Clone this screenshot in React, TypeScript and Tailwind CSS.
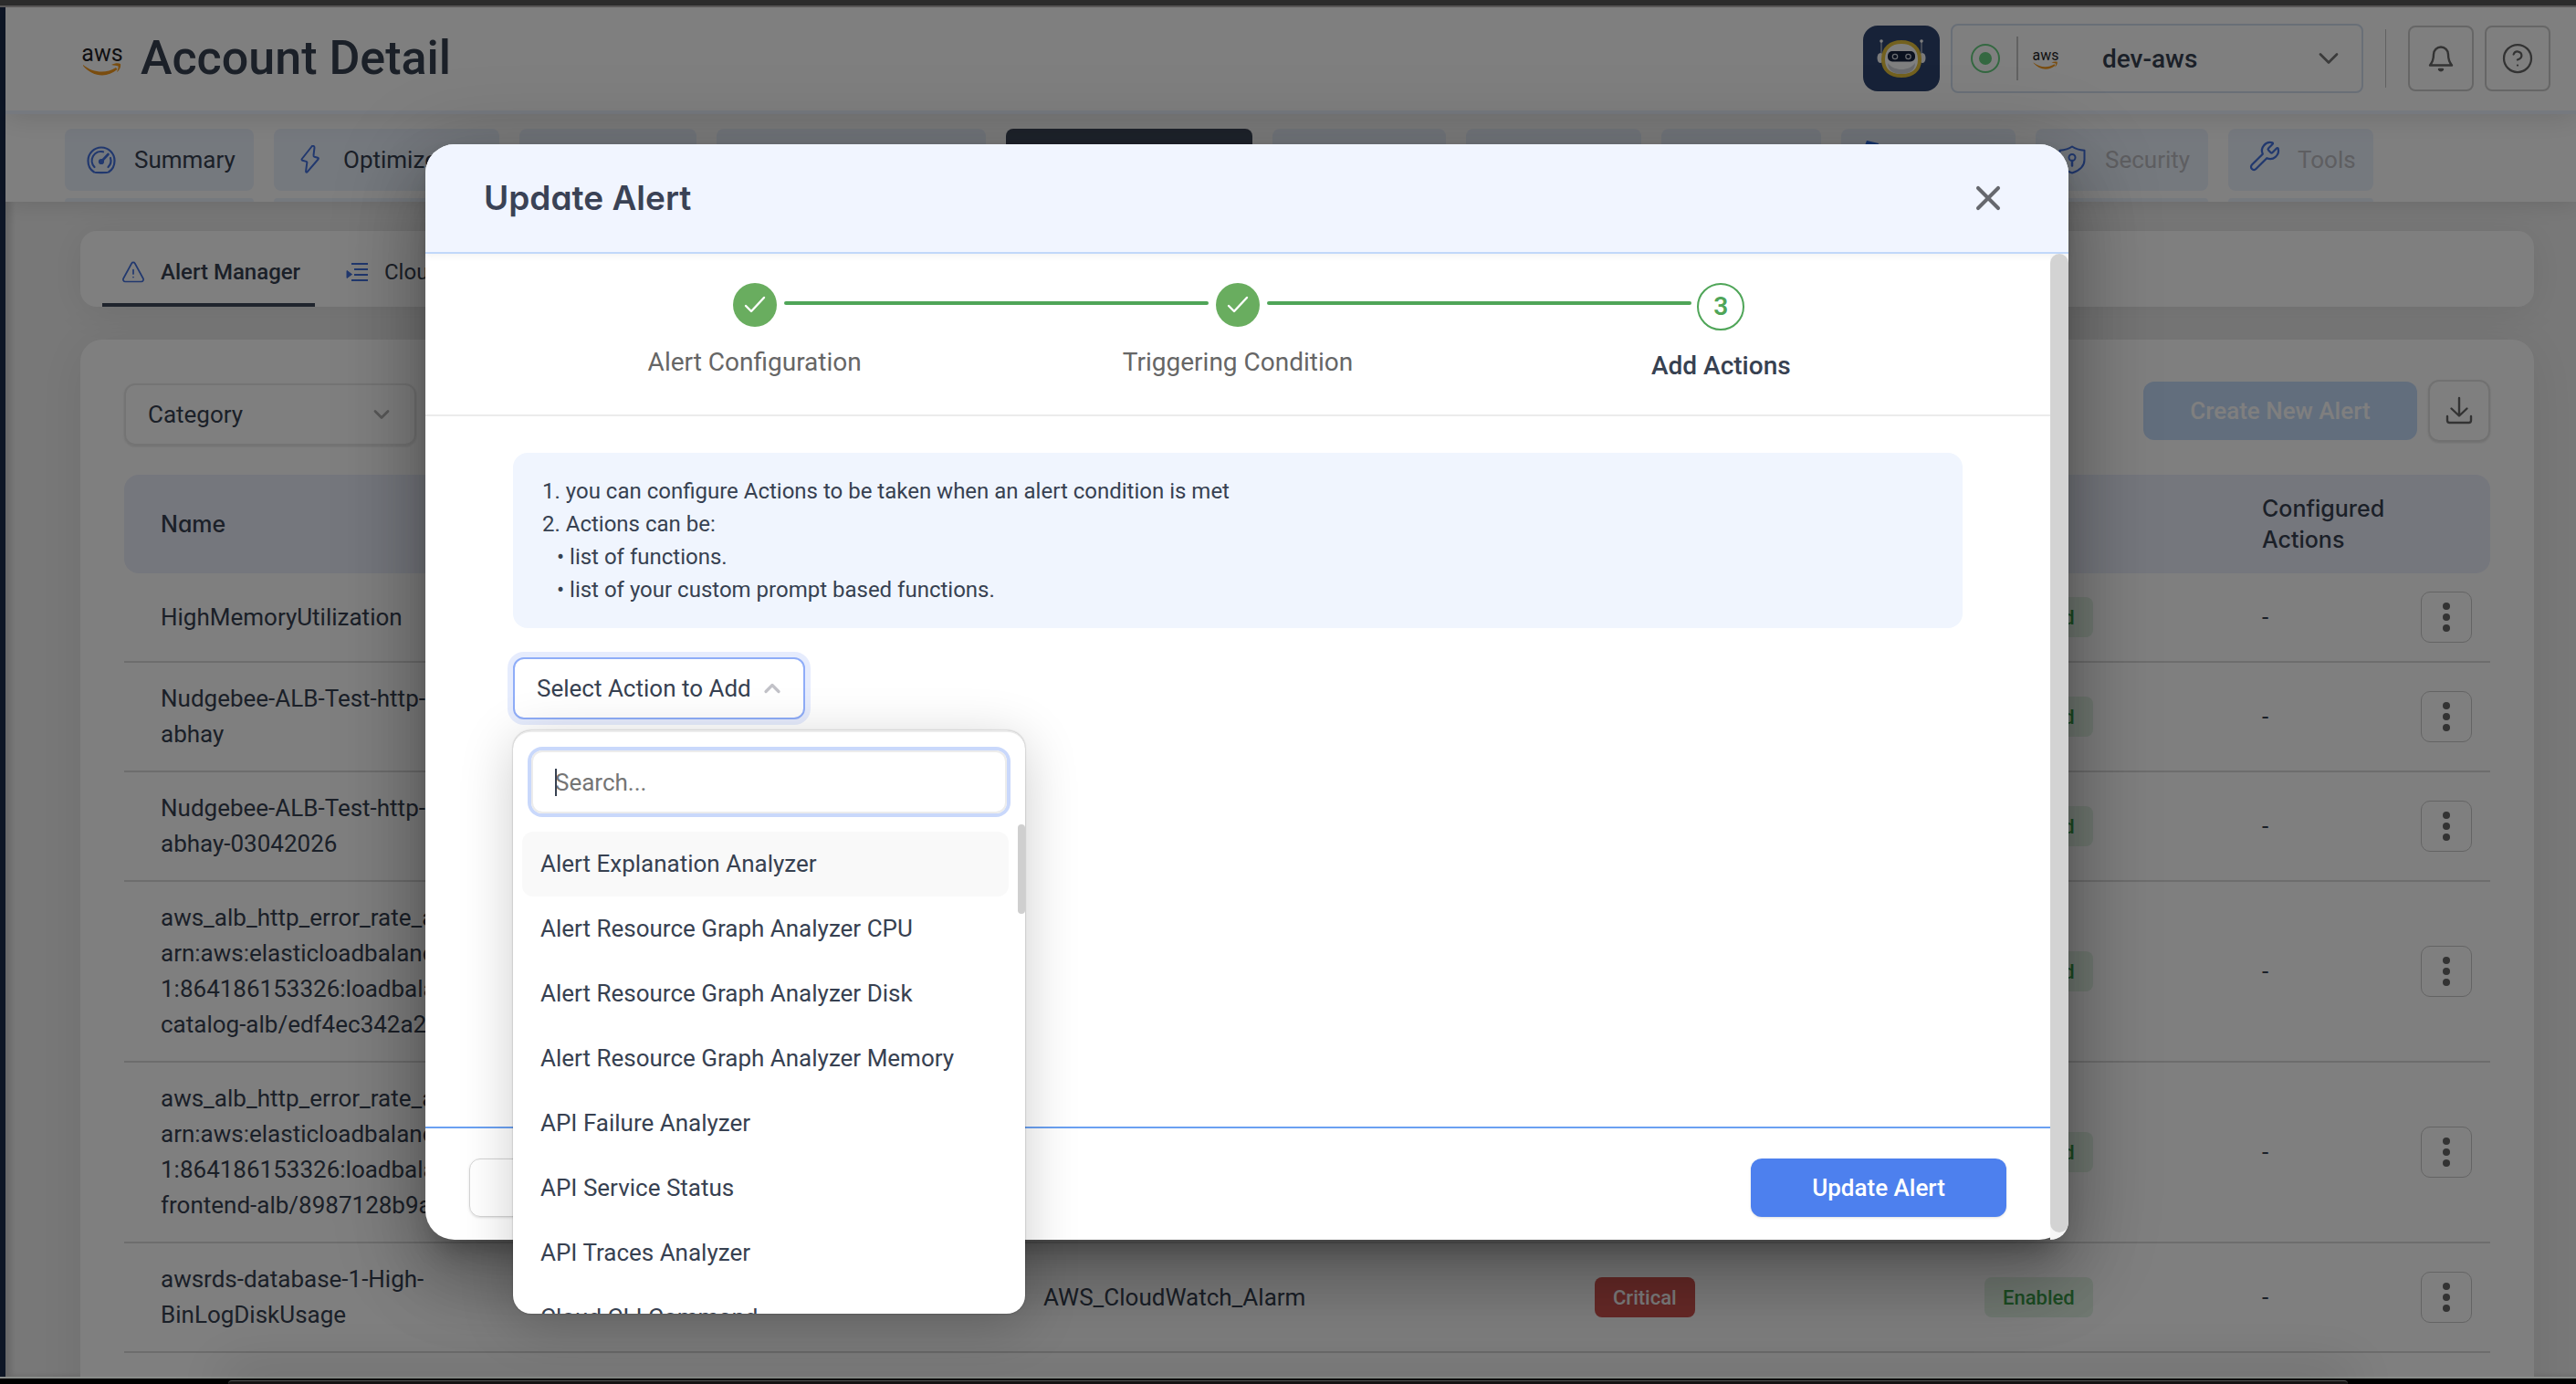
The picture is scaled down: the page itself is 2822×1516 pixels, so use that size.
import React from "react";
import { ChevronDown, ChevronUp, CircleHelp, Wrench, X } from "lucide-react";

const heading = "font-[Inter,sans-serif] [font-feature-settings:'cv11','ss03']";

function AwsLogo({ className }: { className: string }) {
  return (
    <svg viewBox="0 0 44 46" className={`overflow-visible ${className}`} role="img" aria-label="AWS">
      <text x="22" y="26" textAnchor="middle" fontSize="25" fontWeight="400" fontFamily="Roboto, sans-serif" fill="#1f1f26">
        aws
      </text>
      <path d="M1 30c11 9 25 10 36 3l1.500 2C27 45 11 43 1 31z" fill="#f59a1e" />
      <path d="M32 30c4-2 8-2 10-1 .6 3-1 7-4 9 1-3 2-5 1.500-6.500-2-.8-4-.8-7.500-1.500z" fill="#f59a1e" />
    </svg>
  );
}

function GaugeIcon() {
  return (
    <svg viewBox="0 0 32 32" className="size-8" fill="none" stroke="#4371dd" strokeWidth="2.200" strokeLinecap="round">
      <path d="M8 29.500C4 27 1.500 22 1.500 17a14.500 14.500 0 0 1 29 0c0 5-2.500 10-6.500 12.500-1 .8-15 .8-16 0z" strokeLinejoin="round" />
      <path d="M8.500 24A10 10 0 0 1 18 7.300M26 14a10 10 0 0 1-2.500 10" />
      <path d="M16 18l7.500-8" strokeWidth="2.600" />
      <circle cx="16" cy="18" r="2" fill="#4371dd" />
    </svg>
  );
}

function BoltIcon() {
  return (
    <svg viewBox="0 0 32 32" className="size-8" fill="none" stroke="#4371dd" strokeWidth="2" strokeLinejoin="round">
      <path d="M17.500 1.500 6.800 15c-.5.8-.3 1.400.5 1.700l4.200 1.200c.8.300 1 .8.8 1.500l-1.200 9c-.1 1.300.9 1.800 1.700.8L24.500 15.500c.7-.9.4-1.500-.5-1.800l-3.600-1c-.8-.3-1-.8-.9-1.500l1-8.500c0-1.500-1.700-2.800-3-1.200z" />
    </svg>
  );
}

function ShieldIcon() {
  return (
    <svg viewBox="0 0 32 32" className="size-8" fill="none" stroke="#4371dd" strokeWidth="2" strokeLinejoin="round" strokeLinecap="round">
      <path d="M16 1.500c4 2.800 8 3.800 13.500 4.300V16c0 7-6 12-13.500 14.500C8.500 28 2.500 23 2.500 16V5.800C8 5.300 12 4.300 16 1.500z" />
      <circle cx="16" cy="13.500" r="3.500" />
      <path d="M16 17v5.500" strokeWidth="2.500" />
    </svg>
  );
}

function TagIcon() {
  return (
    <svg viewBox="0 0 32 32" className="size-8 overflow-visible" fill="#2f6ae0">
      <path d="M4-5l13 3-3 14L-1 8z" />
    </svg>
  );
}

function WarningIcon() {
  return (
    <svg viewBox="0 0 24 24" className="size-6" fill="none" stroke="#4371dd" strokeWidth="1.700" strokeLinejoin="round" strokeLinecap="round">
      <path d="M10.200 2.500c.8-1.400 2.800-1.400 3.600 0l9 16.500c.8 1.600-.2 3.500-2 3.500H3.200c-1.800 0-2.800-1.900-2-3.500z" />
      <path d="M12 9.500v4.500M12 17.500v.1" />
    </svg>
  );
}

function ListIcon() {
  return (
    <svg viewBox="0 0 24 24" className="size-6" fill="none" stroke="#4371dd" strokeWidth="2">
      <path d="M6 3h18M9 9h15M9 15h15M6 21h18" />
      <path d="M1 10.500 6.500 14.500 1 18.500z" fill="#4371dd" strokeWidth="1" />
    </svg>
  );
}

function RobotIcon() {
  return (
    <svg viewBox="0 0 84 72" className="h-[72px] w-[84px]">
      <path d="M20 18v18M64 18v18" stroke="#a8b0c0" strokeWidth="1.500" />
      <circle cx="20" cy="17" r="1.800" fill="#fff" />
      <circle cx="64" cy="17" r="1.800" fill="#fff" />
      <ellipse cx="19" cy="35.500" rx="3.500" ry="5.500" fill="#f4f4f6" />
      <ellipse cx="65" cy="35.500" rx="3.500" ry="5.500" fill="#f4f4f6" />
      <path d="M42 18c12 0 20 7 20 19S54 55 42 55 22 49 22 37s8-19 20-19z" fill="#fff" stroke="#e6c23e" strokeWidth="4" />
      <path d="M27 41c4 5 9 7 15 7s11-2 15-7c0 8-6 12-15 12s-15-4-15-12z" fill="#d2d4da" />
      <rect x="27" y="28" width="30" height="11.500" rx="5" fill="#17233f" />
      <circle cx="35" cy="34" r="2.700" fill="none" stroke="#d5d9e2" strokeWidth="1.200" />
      <circle cx="49.500" cy="34" r="2.700" fill="none" stroke="#d5d9e2" strokeWidth="1.200" />
    </svg>
  );
}

function BellIcon() {
  return (
    <svg viewBox="0 0 32 32" className="size-8" fill="none" stroke="#666" strokeWidth="2.400" strokeLinejoin="round" strokeLinecap="round">
      <path d="M4 23.500c2.500-3 4-6 4-12a8 8 0 0 1 16 0c0 6 1.500 9 4 12z" />
      <path d="M14 28c1 1.600 3 1.600 4 0z" />
    </svg>
  );
}

function DownloadIcon() {
  return (
    <svg viewBox="0 0 32 32" className="size-8" fill="none" stroke="#666" strokeWidth="2.400" strokeLinejoin="round" strokeLinecap="round">
      <path d="M16 2v19M7.500 13.500 16 21.500l8.500-8M3 22v4.500c0 1.500 1 2.500 2.500 2.500h21c1.500 0 2.500-1 2.500-2.500V22" />
    </svg>
  );
}

function CheckIcon() {
  return (
    <svg viewBox="0 0 24 24" className="size-6" fill="none" stroke="#fff" strokeWidth="2.400" strokeLinejoin="round" strokeLinecap="round">
      <path d="M2 13l6 6L22 4" />
    </svg>
  );
}

type Tab = { label: string; width: string; icon?: React.ReactNode; text?: boolean; active?: boolean; disabled?: boolean };

const tabs: Tab[] = [
  { label: "Summary", width: "w-[207px]", icon: <GaugeIcon />, text: true },
  { label: "Optimize", width: "w-[247px]", icon: <BoltIcon />, text: true },
  { label: "Tab 3", width: "w-[194px]" },
  { label: "Tab 4", width: "w-[295px]" },
  { label: "Tab 5", width: "w-[270px]", active: true },
  { label: "Tab 6", width: "w-[190px]" },
  { label: "Tab 7", width: "w-[192px]" },
  { label: "Tab 8", width: "w-[175px]" },
  { label: "Tab 9", width: "w-[191px]", icon: <TagIcon /> },
  { label: "Security", width: "w-[189px]", icon: <ShieldIcon />, text: true, disabled: true },
  { label: "Tools", width: "w-[159px]", icon: <Wrench className="-mx-0.5 mb-2 size-9 shrink-0 text-[#4371dd]" strokeWidth={1.5} />, text: true, disabled: true },
];

const alerts: string[][] = [
  ["HighMemoryUtilization"],
  ["Nudgebee-ALB-Test-http-error-", "abhay"],
  ["Nudgebee-ALB-Test-http-error-", "abhay-03042026"],
  ["aws_alb_http_error_rate_alarm_", "arn:aws:elasticloadbalancing:us-east-", "1:864186153326:loadbalancer/app/", "catalog-alb/edf4ec342a2e"],
  ["aws_alb_http_error_rate_alarm_", "arn:aws:elasticloadbalancing:us-east-", "1:864186153326:loadbalancer/app/", "frontend-alb/8987128b9a"],
  ["awsrds-database-1-High-", "BinLogDiskUsage"],
];

const actions = [
  "Alert Explanation Analyzer",
  "Alert Resource Graph Analyzer CPU",
  "Alert Resource Graph Analyzer Disk",
  "Alert Resource Graph Analyzer Memory",
  "API Failure Analyzer",
  "API Service Status",
  "API Traces Analyzer",
  "Cloud CLI Command",
];

function Header() {
  return (
    <header className="relative z-10 flex h-[117px] shrink-0 items-center justify-between border-b-4 border-[#edf3fe] bg-white pr-7 pb-0.5 pl-[84px] shadow-[0_2px_30px_rgba(0,0,0,0.14)]">
      <div className="flex items-center gap-5">
        <AwsLogo className="h-[46px] w-11" />
        <h1 className="text-[52px] leading-none font-medium">Account Detail</h1>
      </div>
      <div className="flex items-center gap-3">
        <button aria-label="Assistant" className="rounded-[16px] bg-[#2f4570]">
          <RobotIcon />
        </button>
        <div className="relative flex h-[76px] w-[452px] items-center rounded-lg border-2 border-[#d3deee]">
          <span className="ml-5 flex size-8 items-center justify-center rounded-full border-2 border-[#69d183]">
            <span className="size-[14px] rounded-full bg-[#69d183]" />
          </span>
          <span className="ml-[18px] h-12 w-0.5 bg-[#c4c4c4]" />
          <AwsLogo className="ml-4 h-[30px] w-7" />
          <select aria-label="Account" className="h-full flex-1 appearance-none pt-0.5 pl-12 text-[28px] font-medium outline-none">
            <option>dev-aws</option>
          </select>
          <ChevronDown className="pointer-events-none absolute right-[18px] size-9 text-[#777]" strokeWidth={1.8} />
        </div>
        <span className="mx-3 h-16 w-px bg-[#c4c4c4]" />
        <button aria-label="Notifications" className="flex size-[72px] items-center justify-center rounded-lg border-2 border-[#cdcdcd]">
          <BellIcon />
        </button>
        <button aria-label="Help" className="flex size-[72px] items-center justify-center rounded-lg border-2 border-[#cdcdcd]">
          <CircleHelp className="size-9 text-[#666]" strokeWidth={1.5} />
        </button>
      </div>
    </header>
  );
}

function NavTabs() {
  return (
    <nav className="relative flex h-24 shrink-0 gap-[22px] bg-white pt-4 pl-[65px] shadow-[0_2px_24px_rgba(0,0,0,0.12)]">
      {tabs.map((t) => (
        <div key={t.label} className={`flex shrink-0 flex-col gap-2 ${t.width}`}>
          <button
            aria-label={t.label}
            disabled={t.disabled}
            className={`flex h-[68px] items-center gap-5 rounded-lg pl-6 text-[26px] ${t.active ? "bg-[#40495b]" : "bg-[#ebf2fd]"} ${t.disabled ? "text-[#bcbdc2]" : ""}`}
          >
            {t.icon}
            {t.text && t.label}
          </button>
          <span className="h-1 rounded-t-sm bg-[#ebf2fd]" />
        </div>
      ))}
    </nav>
  );
}

function AlertTable() {
  return (
    <table className="w-full table-fixed border-separate border-spacing-0 text-left text-[26px] leading-[39px]">
      <colgroup>
        <col />
        <col className="w-[604px]" />
        <col className="w-[427px]" />
        <col className="w-[304px]" />
        <col className="w-[194px]" />
        <col className="w-24" />
      </colgroup>
      <thead className={`${heading} text-[25px] leading-[34px]`}>
        <tr className="h-[108px] [&>th]:bg-[#ebeefb] [&>th]:pl-10 [&>th]:font-medium">
          <th className="rounded-l-2xl">Name</th>
          <th>Source</th>
          <th>Severity</th>
          <th className="!pl-[52px]">Status</th>
          <th>Configured Actions</th>
          <th className="rounded-r-2xl" aria-label="Row menu" />
        </tr>
      </thead>
      <tbody>
        {alerts.map((lines, i) => (
          <tr key={i} className="[&>td]:border-b-2 [&>td]:border-[#dadada] [&>td]:py-5 [&>td]:pl-10">
            <td>
              {lines.map((l) => (
                <div key={l}>{l}</div>
              ))}
            </td>
            <td>AWS_CloudWatch_Alarm</td>
            <td>
              <span className="inline-flex h-11 items-center rounded-lg bg-[#d15451] px-5 align-middle text-[22px] font-medium text-white">Critical</span>
            </td>
            <td>
              <span className="inline-flex h-11 items-center rounded-lg bg-[#e2f3e5] px-5 align-middle text-[22px] font-medium text-[#3b9a49]">Enabled</span>
            </td>
            <td>-</td>
            <td className="!pl-5">
              <button aria-label="More actions" className="flex size-14 flex-col items-center justify-center gap-1 rounded-[10px] border border-[#c8c8c8]">
                <i className="size-2 rounded-full bg-[#666]" />
                <i className="size-2 rounded-full bg-[#666]" />
                <i className="size-2 rounded-full bg-[#666]" />
              </button>
            </td>
          </tr>
        ))}
      </tbody>
    </table>
  );
}

function Background() {
  return (
    <div className="flex h-full">
      <div className="w-1.5 shrink-0 bg-[#1b2d4d]" />
      <div className="flex min-w-0 flex-1 flex-col bg-[#f1f1f1] shadow-[inset_6px_0_6px_rgba(0,0,0,0.14)]">
        <Header />
        <NavTabs />
        <main className="flex flex-col px-[82px] pr-[46px] pt-8">
          <div className="flex h-[83px] items-stretch rounded-[18px] bg-white pl-6 text-2xl shadow-[0_4px_40px_rgba(0,0,0,0.08)]">
            <button className="flex w-[233px] items-center gap-[18px] border-b-4 border-[#40495b] pt-2.5 pl-[22px] font-medium">
              <WarningIcon />
              Alert Manager
            </button>
            <button className="flex items-center gap-[18px] pt-1.5 pl-[34px]">
              <ListIcon />
              CloudWatch
            </button>
          </div>
          <section className="mt-9 h-[1300px] rounded-[24px] bg-white px-12 pt-11 shadow-[0_4px_60px_rgba(0,0,0,0.08)]">
            <div className="mb-9 flex h-[68px] items-center justify-between">
              <div className="relative mt-2 flex h-[68px] w-80 items-center rounded-xl border-2 border-[#e8e8e8] shadow-sm">
                <select aria-label="Category" className="h-full w-full appearance-none pl-6 text-[26px] outline-none">
                  <option>Category</option>
                </select>
                <ChevronDown className="pointer-events-none absolute right-[22px] size-7 text-[#b0b0b0]" strokeWidth={2.4} />
              </div>
              <div className="flex items-center gap-3">
                <button disabled className="h-16 w-[300px] rounded-xl bg-[#c5dcfb] text-[26px] font-medium text-white">
                  Create New Alert
                </button>
                <button aria-label="Download" className="flex size-[68px] items-center justify-center rounded-xl border-2 border-[#e2e2e2] shadow-sm">
                  <DownloadIcon />
                </button>
              </div>
            </div>
            <AlertTable />
          </section>
        </main>
      </div>
    </div>
  );
}

function Stepper() {
  const steps = ["Alert Configuration", "Triggering Condition", "Add Actions"];
  return (
    <ol className="grid h-[178px] grid-cols-3 border-b-2 border-[#ebebeb] px-24 pt-8 text-[28px] text-[#666]">
      {steps.map((s, i) => {
        const current = i === 2;
        return (
          <li key={s} className="relative flex flex-col items-center gap-5">
            {i > 0 && <span className="absolute top-5 right-1/2 left-[-50%] mr-8 ml-8 h-1 rounded-full bg-[#4fa558]" />}
            {current ? (
              <span className="flex size-[52px] items-center justify-center rounded-full border-2 border-[#4fa558] font-semibold text-[#4fa558]">3</span>
            ) : (
              <span className="flex size-12 items-center justify-center rounded-full bg-[#69ad5f]">
                <CheckIcon />
              </span>
            )}
            <span className={current ? "leading-[38px] font-medium text-[#374151]" : "leading-[38px]"}>{s}</span>
          </li>
        );
      })}
    </ol>
  );
}

function ActionPicker() {
  return (
    <div className="relative mt-8 w-80">
      <button
        aria-haspopup="listbox"
        aria-expanded="true"
        className="flex h-[68px] w-full items-center justify-between rounded-xl border-2 border-[#8fadf8] bg-white pr-5 pl-6 text-[26px] ring-6 ring-[#e6ecfd]"
      >
        Select Action to Add
        <ChevronUp className="size-7 text-[#c2c2c8]" strokeWidth={2.8} />
      </button>
      <div className="absolute top-20 left-0 z-20 flex h-[639px] w-[561px] flex-col overflow-hidden rounded-[20px] border-t-2 border-[#ececec] bg-white shadow-[0_0_2px_rgba(0,0,0,0.35),0_12px_60px_rgba(0,0,0,0.2)]">
        <input
          type="text"
          aria-label="Search actions"
          placeholder="Search..."
          className="mx-5 mt-5 h-[69px] shrink-0 rounded-xl border-2 border-[#ececec] pl-6 text-[26px] outline-none ring-4 ring-[#c9d8fb] placeholder:text-[#757575]"
        />
        <span className="pointer-events-none absolute top-[40px] left-[46px] h-[30px] w-0.5 bg-[#374151]" />
        <div className="mt-3 flex min-h-0 flex-1">
          <ul role="listbox" aria-label="Actions" className="flex-1 overflow-hidden pt-2 pl-2.5 text-[26px] leading-[39px]">
            {actions.map((a, i) => (
              <li key={a} role="option" aria-selected={i === 0} className={`mr-2.5 rounded-xl px-5 py-4 ${i === 0 ? "bg-[#f9f9f9]" : ""}`}>
                {a}
              </li>
            ))}
          </ul>
          <span className="h-[98px] w-2 rounded-full bg-[#cfcfcf]" />
        </div>
      </div>
    </div>
  );
}

function Modal() {
  return (
    <div
      role="dialog"
      aria-label="Update Alert"
      className="relative flex h-[80%] w-[1800px] max-w-full flex-col rounded-[32px] bg-white shadow-[0_22px_30px_-14px_rgba(0,0,0,0.3),0_48px_76px_6px_rgba(0,0,0,0.16),0_18px_92px_16px_rgba(0,0,0,0.2)]"
    >
      <div className="flex h-[120px] shrink-0 items-center justify-between rounded-t-[32px] border-b-2 border-[#c1d8fa] bg-[#f1f5ff] pr-[66px] pl-16 shadow-[0_2px_8px_rgba(0,0,0,0.06)]">
        <h2 className={`${heading} text-[37px] leading-10 font-semibold text-[#3a4255]`}>Update Alert</h2>
        <button aria-label="Close">
          <X className="size-11 text-[#66686e]" strokeWidth={2.2} />
        </button>
      </div>
      <div className="flex min-h-0 flex-1">
        <div className="flex min-w-0 flex-1 flex-col">
          <Stepper />
          <div className="flex-1 px-24 pt-10">
            <div className="rounded-2xl bg-[#f0f5fe] px-8 py-6 text-2xl leading-9">
              <p>1. you can configure Actions to be taken when an alert condition is met</p>
              <p>2. Actions can be:</p>
              <p className="pl-4">• list of functions.</p>
              <p className="pl-4">• list of your custom prompt based functions.</p>
            </div>
            <ActionPicker />
          </div>
          <div className="flex h-[124px] items-center justify-between border-t-2 border-[#6ba1f2] px-12 pt-2">
            <button aria-label="Cancel" className="h-16 w-[280px] rounded-xl border border-[#d4d4d4] shadow-sm" />
            <button className="h-16 w-[280px] rounded-xl bg-[#4d80ee] text-[26px] font-medium text-white shadow-sm">Update Alert</button>
          </div>
        </div>
        <div className="w-5 overflow-hidden rounded-br-[32px] bg-[#f6f6f6] pb-2">
          <div className="h-full rounded-full bg-[#d3d3d3]" />
        </div>
      </div>
    </div>
  );
}

export default function App() {
  return (
    <div className="flex h-screen flex-col overflow-hidden bg-black font-[Roboto,sans-serif] text-[#374151]">
      <div className="h-2 shrink-0 border-b-2 border-[#595757] bg-[#2c2c2c]" />
      <div className="relative min-h-0 flex-1 overflow-hidden">
        <Background />
        <div className="absolute inset-0 z-20 flex items-center justify-center bg-black/50 pr-[90px]">
          <Modal />
        </div>
      </div>
      <div className="relative h-2 shrink-0 border-t-2 border-[#8a8d8a] bg-black px-[250px]">
        <div className="mx-auto mt-0.5 h-1 rounded-t-[24px] border-t border-[#555] bg-[#161414] shadow-[0_0_60px_8px_rgba(0,0,0,0.25)]" />
      </div>
    </div>
  );
}
